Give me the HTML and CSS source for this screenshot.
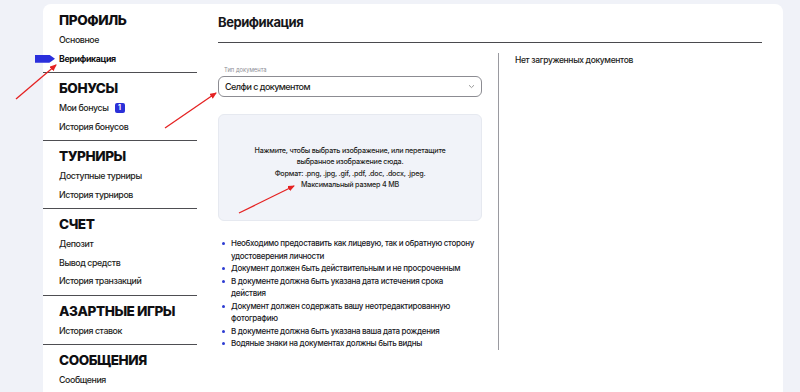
FILE: index.html
```html
<!DOCTYPE html>
<html lang="ru">
<head>
<meta charset="utf-8">
<title>Верификация</title>
<link rel="stylesheet" href="styles.css">
</head>
<body>
<div class="card">
  <aside class="sidebar">
    <section class="sec first">
      <h2>ПРОФИЛЬ</h2>
      <a class="link">Основное</a>
      <a class="link active"><span class="marker"></span>Верификация</a>
    </section>
    <section class="sec">
      <h2>БОНУСЫ</h2>
      <a class="link">Мои бонусы <span class="badge">1</span></a>
      <a class="link">История бонусов</a>
    </section>
    <section class="sec">
      <h2>ТУРНИРЫ</h2>
      <a class="link">Доступные турниры</a>
      <a class="link">История турниров</a>
    </section>
    <section class="sec">
      <h2>СЧЕТ</h2>
      <a class="link">Депозит</a>
      <a class="link">Вывод средств</a>
      <a class="link">История транзакций</a>
    </section>
    <section class="sec">
      <h2>АЗАРТНЫЕ ИГРЫ</h2>
      <a class="link">История ставок</a>
    </section>
    <section class="sec last">
      <h2>СООБЩЕНИЯ</h2>
      <a class="link">Сообщения</a>
    </section>
  </aside>
  <main class="main">
    <header class="head"><h1>Верификация</h1></header>
    <div class="row">
      <div class="leftcol">
        <div class="label">Тип документа</div>
        <div class="select">
          <span>Селфи с документом</span>
          <svg class="chev" width="7" height="5" viewBox="0 0 7 5"><path d="M1 1.2 L3.5 3.6 L6 1.2" fill="none" stroke="#999" stroke-width="1"/></svg>
        </div>
        <div class="upload">
          <p>Нажмите, чтобы выбрать изображение, или перетащите<br>выбранное изображение сюда.<br>Формат: .png, .jpg, .gif, .pdf, .doc, .docx, .jpeg.<br>Максимальный размер 4 MB</p>
        </div>
        <ul class="rules">
          <li>Необходимо предоставить как лицевую, так и обратную сторону удостоверения личности</li>
          <li>Документ должен быть действительным и не просроченным</li>
          <li>В документе должна быть указана дата истечения срока<br>действия</li>
          <li>Документ должен содержать вашу неотредактированную фотографию</li>
          <li>В документе должна быть указана ваша дата рождения</li>
          <li>Водяные знаки на документах должны быть видны</li>
        </ul>
      </div>
      <div class="rightcol">Нет загруженных документов</div>
    </div>
  </main>
</div>
<svg class="annot" width="800" height="392" viewBox="0 0 800 392">
  <defs>
    <marker id="ah" markerWidth="8" markerHeight="8" refX="6" refY="3" orient="auto" markerUnits="userSpaceOnUse">
      <path d="M0 0 L7 3 L0 6 Z" fill="#e52222"/>
    </marker>
  </defs>
  <line x1="16" y1="99" x2="56" y2="65" stroke="#e52222" stroke-width="1.3" marker-end="url(#ah)"/>
  <line x1="165" y1="128" x2="216" y2="93" stroke="#e52222" stroke-width="1.3" marker-end="url(#ah)"/>
  <line x1="239" y1="213" x2="294" y2="186" stroke="#e52222" stroke-width="1.3" marker-end="url(#ah)"/>
</svg>
</body>
</html>
```
FILE: styles.css
```css
* { box-sizing: border-box; }
html, body { margin: 0; padding: 0; }
body {
  background: #f0f2f8;
  font-family: Inter, "Noto Sans", sans-serif;
  color: #1b1b1f;
  width: 800px;
  height: 392px;
  overflow: hidden;
  position: relative;
}
.card {
  margin: 4px 0 0 43px;
  width: 740px;
  height: 388px;
  background: #ffffff;
  border-radius: 8px 8px 0 0;
  display: flex;
}
.sidebar {
  width: 154px;
  flex: none;
  display: flex;
  flex-direction: column;
}
.sec {
  padding: 5px 0 4px 16px;
  border-bottom: 1.5px solid #4e4e52;
  display: flex;
  flex-direction: column;
}
.sec.first { padding-top: 6px; }
.sec.last { border-bottom: none; }
.sec h2 {
  margin: 0 0 1px;
  font-size: 13.6px;
  line-height: 20px;
  font-weight: 800;
  color: #0f0f12;
  letter-spacing: -0.45px;
}
.link {
  font-size: 8.8px;
  line-height: 18.5px;
  font-weight: 500;
  color: #1e1e22;
  letter-spacing: -0.4px;
  display: flex;
  align-items: center;
}
.link.active { font-weight: 700; color: #111114; }
.marker {
  flex: none;
  width: 20px;
  height: 8px;
  margin-left: -24px;
  margin-right: 4px;
  background: #2a2fdc;
  clip-path: polygon(0 0, 72% 0, 100% 50%, 72% 100%, 0 100%);
}
.badge {
  display: inline-flex;
  align-items: center;
  justify-content: center;
  width: 10px;
  height: 10px;
  margin-left: 6px;
  border-radius: 2px;
  background: #2b30d8;
  color: #fff;
  font-size: 7px;
  font-weight: 700;
  letter-spacing: 0;
}
.main {
  flex: 1;
  padding: 0 21px;
  display: flex;
  flex-direction: column;
}
.head {
  padding: 8px 0 10px;
  border-bottom: 1.5px solid #4a4a4e;
}
.head h1 {
  margin: 0;
  font-size: 13px;
  line-height: 20px;
  font-weight: 700;
  color: #17171a;
  letter-spacing: -0.45px;
}
.row {
  margin-top: 10px;
  display: flex;
  gap: 16px;
}
.leftcol {
  width: 264px;
  flex: none;
  padding-top: 12px;
  display: flex;
  flex-direction: column;
}
.label {
  font-size: 5.8px;
  line-height: 10px;
  color: #8d8d94;
  padding-left: 6px;
}
.select {
  margin-top: 1px;
  height: 21px;
  border: 1px solid #8c8c92;
  border-radius: 6px;
  padding: 0 6px 0 6px;
  display: flex;
  align-items: center;
  justify-content: space-between;
  font-size: 9px;
  font-weight: 500;
  color: #1c1c20;
  letter-spacing: -0.55px;
}
.upload {
  margin-top: 17px;
  height: 107px;
  background: #f1f3f9;
  border: 1px solid #e6e9f0;
  border-radius: 6px;
  display: flex;
  align-items: center;
  justify-content: center;
}
.upload p {
  margin: 0;
  text-align: center;
  font-size: 7.2px;
  line-height: 11.3px;
  font-weight: 500;
  color: #1f1f23;
  letter-spacing: -0.22px;
}
.rules {
  list-style: none;
  margin: 16px -6px 0 0;
  padding: 0;
}
.rules li {
  display: flex;
  gap: 6px;
  font-size: 8px;
  line-height: 12.5px;
  font-weight: 500;
  color: #1a1a1f;
  letter-spacing: -0.3px;
}
.rules li::before {
  content: "";
  flex: none;
  width: 3px;
  height: 3px;
  border-radius: 50%;
  background: #2d3cd2;
  margin: 5px 0 0 4px;
}
.rightcol {
  flex: 1;
  border-left: 1.5px solid #9a9aa0;
  padding-left: 16px;
  font-size: 8.5px;
  line-height: 14px;
  font-weight: 500;
  color: #1c1c20;
  letter-spacing: -0.35px;
}
.annot {
  position: absolute;
  left: 0;
  top: 0;
  pointer-events: none;
}
```
